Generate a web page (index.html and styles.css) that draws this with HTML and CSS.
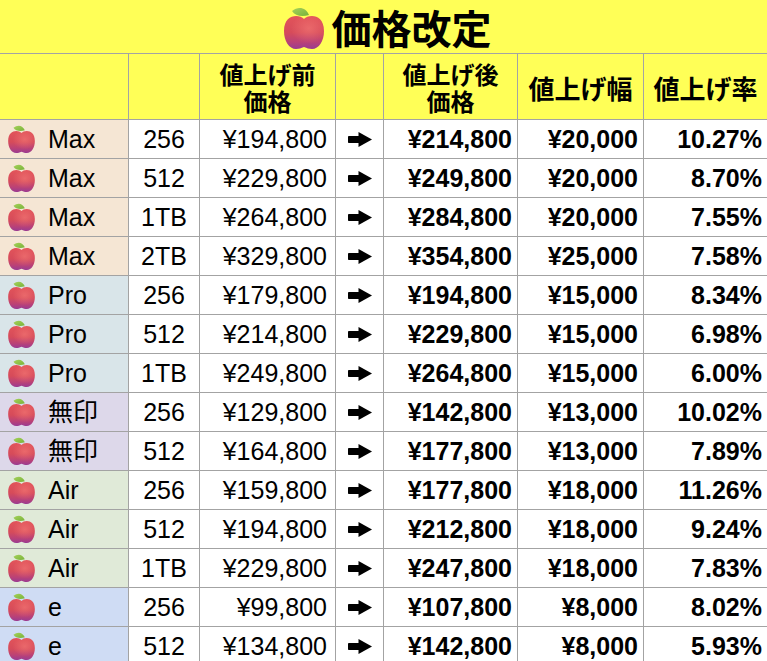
FILE: index.html
```html
<!DOCTYPE html>
<html lang="ja">
<head>
<meta charset="utf-8">
<title>価格改定</title>
<link rel="stylesheet" href="styles.css">
</head>
<body>
<svg class="defs" width="0" height="0" aria-hidden="true">
  <defs>
    <linearGradient id="appleBody" x1="0" y1="0" x2="0" y2="1">
      <stop offset="0" stop-color="#e2545a"/>
      <stop offset="0.5" stop-color="#d64b5a"/>
      <stop offset="0.78" stop-color="#bb4276"/>
      <stop offset="1" stop-color="#9a3b92"/>
    </linearGradient>
    <radialGradient id="appleShine" cx="0.62" cy="0.38" r="0.45">
      <stop offset="0" stop-color="#ff8a80" stop-opacity="0.45"/>
      <stop offset="1" stop-color="#ff8a80" stop-opacity="0"/>
    </radialGradient>
    <linearGradient id="appleLeaf" x1="0" y1="0" x2="1" y2="1">
      <stop offset="0" stop-color="#a6d25a"/>
      <stop offset="1" stop-color="#78b23a"/>
    </linearGradient>
    <symbol id="apple" viewBox="0 0 40 42">
      <path d="M8 4 C14 -1 22 0 25 8 C18 10 11 9 8 4Z" fill="url(#appleLeaf)"/>
      <path d="M20 12 C15 7 0 7 0 24 C0 34 5 42 12 42 C15 42 17 41 20 40 C23 41 25 42 28 42 C35 42 40 34 40 24 C40 7 25 7 20 12Z" fill="url(#appleBody)"/>
      <path d="M20 12 C15 7 0 7 0 24 C0 34 5 42 12 42 C15 42 17 41 20 40 C23 41 25 42 28 42 C35 42 40 34 40 24 C40 7 25 7 20 12Z" fill="url(#appleShine)"/>
    </symbol>
    <symbol id="arrow" viewBox="0 0 24 15">
      <rect x="0" y="4" width="12" height="7" rx="0.8"/>
      <path d="M10.5 0 L24 7.5 L10.5 15 Z"/>
    </symbol>
  </defs>
</svg>

<div class="sheet">
  <div class="title">
    <svg class="apple-lg"><use href="#apple"/></svg>
    <span>価格改定</span>
  </div>

  <div class="grid">
    <div class="h"></div>
    <div class="h"></div>
    <div class="h two"><span>値上げ前</span><span>価格</span></div>
    <div class="h"></div>
    <div class="h two"><span>値上げ後</span><span>価格</span></div>
    <div class="h one">値上げ幅</div>
    <div class="h one">値上げ率</div>

    <div class="name max"><svg class="apple"><use href="#apple"/></svg>Max</div>
    <div class="cap">256</div><div class="price">¥194,800</div>
    <div class="arr"><svg class="arrow"><use href="#arrow"/></svg></div>
    <div class="bold">¥214,800</div><div class="bold">¥20,000</div><div class="bold">10.27%</div>

    <div class="name max"><svg class="apple"><use href="#apple"/></svg>Max</div>
    <div class="cap">512</div><div class="price">¥229,800</div>
    <div class="arr"><svg class="arrow"><use href="#arrow"/></svg></div>
    <div class="bold">¥249,800</div><div class="bold">¥20,000</div><div class="bold">8.70%</div>

    <div class="name max"><svg class="apple"><use href="#apple"/></svg>Max</div>
    <div class="cap">1TB</div><div class="price">¥264,800</div>
    <div class="arr"><svg class="arrow"><use href="#arrow"/></svg></div>
    <div class="bold">¥284,800</div><div class="bold">¥20,000</div><div class="bold">7.55%</div>

    <div class="name max"><svg class="apple"><use href="#apple"/></svg>Max</div>
    <div class="cap">2TB</div><div class="price">¥329,800</div>
    <div class="arr"><svg class="arrow"><use href="#arrow"/></svg></div>
    <div class="bold">¥354,800</div><div class="bold">¥25,000</div><div class="bold">7.58%</div>

    <div class="name pro"><svg class="apple"><use href="#apple"/></svg>Pro</div>
    <div class="cap">256</div><div class="price">¥179,800</div>
    <div class="arr"><svg class="arrow"><use href="#arrow"/></svg></div>
    <div class="bold">¥194,800</div><div class="bold">¥15,000</div><div class="bold">8.34%</div>

    <div class="name pro"><svg class="apple"><use href="#apple"/></svg>Pro</div>
    <div class="cap">512</div><div class="price">¥214,800</div>
    <div class="arr"><svg class="arrow"><use href="#arrow"/></svg></div>
    <div class="bold">¥229,800</div><div class="bold">¥15,000</div><div class="bold">6.98%</div>

    <div class="name pro"><svg class="apple"><use href="#apple"/></svg>Pro</div>
    <div class="cap">1TB</div><div class="price">¥249,800</div>
    <div class="arr"><svg class="arrow"><use href="#arrow"/></svg></div>
    <div class="bold">¥264,800</div><div class="bold">¥15,000</div><div class="bold">6.00%</div>

    <div class="name muji"><svg class="apple"><use href="#apple"/></svg>無印</div>
    <div class="cap">256</div><div class="price">¥129,800</div>
    <div class="arr"><svg class="arrow"><use href="#arrow"/></svg></div>
    <div class="bold">¥142,800</div><div class="bold">¥13,000</div><div class="bold">10.02%</div>

    <div class="name muji"><svg class="apple"><use href="#apple"/></svg>無印</div>
    <div class="cap">512</div><div class="price">¥164,800</div>
    <div class="arr"><svg class="arrow"><use href="#arrow"/></svg></div>
    <div class="bold">¥177,800</div><div class="bold">¥13,000</div><div class="bold">7.89%</div>

    <div class="name air"><svg class="apple"><use href="#apple"/></svg>Air</div>
    <div class="cap">256</div><div class="price">¥159,800</div>
    <div class="arr"><svg class="arrow"><use href="#arrow"/></svg></div>
    <div class="bold">¥177,800</div><div class="bold">¥18,000</div><div class="bold">11.26%</div>

    <div class="name air"><svg class="apple"><use href="#apple"/></svg>Air</div>
    <div class="cap">512</div><div class="price">¥194,800</div>
    <div class="arr"><svg class="arrow"><use href="#arrow"/></svg></div>
    <div class="bold">¥212,800</div><div class="bold">¥18,000</div><div class="bold">9.24%</div>

    <div class="name air"><svg class="apple"><use href="#apple"/></svg>Air</div>
    <div class="cap">1TB</div><div class="price">¥229,800</div>
    <div class="arr"><svg class="arrow"><use href="#arrow"/></svg></div>
    <div class="bold">¥247,800</div><div class="bold">¥18,000</div><div class="bold">7.83%</div>

    <div class="name e"><svg class="apple"><use href="#apple"/></svg>e</div>
    <div class="cap">256</div><div class="price">¥99,800</div>
    <div class="arr"><svg class="arrow"><use href="#arrow"/></svg></div>
    <div class="bold">¥107,800</div><div class="bold">¥8,000</div><div class="bold">8.02%</div>

    <div class="name e"><svg class="apple"><use href="#apple"/></svg>e</div>
    <div class="cap">512</div><div class="price">¥134,800</div>
    <div class="arr"><svg class="arrow"><use href="#arrow"/></svg></div>
    <div class="bold">¥142,800</div><div class="bold">¥8,000</div><div class="bold">5.93%</div>
  </div>
</div>
</body>
</html>
```

FILE: styles.css
```css
html, body {
  margin: 0;
  padding: 0;
  height: 661px;
  overflow: hidden;
  background: #ffffff;
}

.defs {
  display: block;
  width: 0;
  height: 0;
  overflow: hidden;
}

.sheet {
  width: 767px;
  font-family: "Liberation Sans", "Noto Sans CJK JP", sans-serif;
  color: #000;
}

.title {
  height: 53px;
  background: #ffff57;
  border-bottom: 1px solid #a3a3a3;
  display: flex;
  align-items: center;
  justify-content: center;
  gap: 8px;
  padding-left: 8px;
  font-family: "Noto Sans CJK JP", sans-serif;
  font-weight: 700;
  font-size: 40px;
  line-height: 50px;
}

.apple-lg {
  width: 40px;
  height: 42px;
  margin-top: 2px;
}

.grid {
  display: grid;
  grid-template-columns: 128px 70px 135px 47px 133px 125px 123px;
  grid-template-rows: 65px;
  grid-auto-rows: 38px;
  gap: 1px;
  background: #a3a3a3;
}

.grid > div {
  background: #ffffff;
  display: flex;
  align-items: center;
  font-size: 25px;
  line-height: 1;
  white-space: nowrap;
}

.grid > .h {
  background: #ffff57;
  justify-content: center;
  text-align: center;
  font-family: "Noto Sans CJK JP", sans-serif;
  font-weight: 700;
  font-size: 24px;
  line-height: 27px;
}

.grid > .two {
  flex-direction: column;
  font-size: 24px;
  padding-top: 1px;
}

.two span {
  display: block;
  height: 27px;
  line-height: 27px;
}

.grid > .one {
  font-size: 26px;
  padding-top: 2px;
}

.grid > .name {
  padding-left: 8px;
  gap: 13px;
}

.apple {
  width: 27px;
  height: 28px;
  flex: none;
}

.max { background: #f5e6d4 !important; }
.pro { background: #d9e5e9 !important; }
.muji { background: #ddd8ea !important; }
.air { background: #e0ead8 !important; }
.e { background: #cfdcf4 !important; }

.grid > .cap {
  justify-content: center;
}

.grid > .price {
  justify-content: flex-end;
  padding-right: 8px;
}

.grid > .arr {
  justify-content: center;
}

.arrow {
  width: 24px;
  height: 15px;
  fill: #000;
}

.grid > .bold {
  justify-content: flex-end;
  padding-right: 5px;
  font-weight: 700;
}
```
